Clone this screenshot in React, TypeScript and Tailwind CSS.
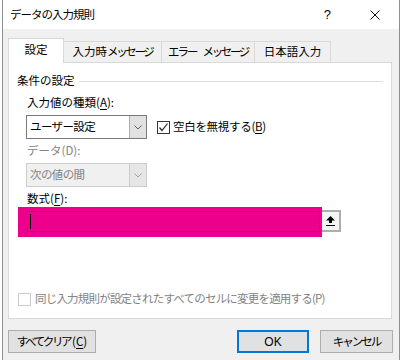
import React from 'react'

const FONT = "font-['Noto_Sans_CJK_JP','Noto_Sans',sans-serif]"

function Chevron({ color = '#606060' }: { color?: string }) {
  return (
    <svg width="8" height="5" viewBox="0 0 8 5">
      <polyline points="0.5,0.5 4,4 7.5,0.5" fill="none" stroke={color} strokeWidth="1" />
    </svg>
  )
}

function Select({ text, disabled = false }: { text: string; disabled?: boolean }) {
  return (
    <div
      className={`flex h-[24px] w-[121px] border ${
        disabled ? 'border-[#cccccc] bg-[#f0f0f0]' : 'border-[#7a7a7a] bg-white'
      }`}>
      <div
        className={`flex flex-1 items-center pl-[3px] tracking-[-0.6px] ${
          disabled ? 'text-[#838383]' : 'text-black'
        }`}>
        {text}
      </div>
      <div
        className={`flex w-[17px] items-center justify-center border-l ${
          disabled ? 'border-[#cccccc] bg-[#e6e6e6]' : 'border-[#adadad] bg-[#e1e1e1]'
        }`}>
        <Chevron color={disabled ? '#a0a0a0' : '#606060'} />
      </div>
    </div>
  )
}

function Button({ children, focused = false, w }: { children: React.ReactNode; focused?: boolean; w: string }) {
  return (
    <div
      className={`flex h-[23px] items-center justify-center bg-[#e1e1e1] ${w} ${
        focused ? 'border-2 border-[#0078d7]' : 'border border-[#adadad]'
      }`}>
      {children}
    </div>
  )
}

export default function App() {
  return (
    <div className={`flex h-[360px] w-[401px] bg-white text-[11.5px] leading-none text-black ${FONT}`}>
      <div className="ml-[2px] flex w-[398px] flex-col border-x border-[#8f8f8f]">
        {/* title bar */}
        <div className="flex h-[29px] shrink-0 items-center bg-white pl-[7px]">
          <span className="tracking-[-1px]">データの入力規則</span>
          <span className="ml-auto mr-[39px] font-['Liberation_Sans',sans-serif] text-[13px]">?</span>
          <svg width="10" height="10" viewBox="0 0 10 10" className="mr-[19px]">
            <path d="M0.5 0.5 L9.5 9.5 M9.5 0.5 L0.5 9.5" stroke="#111" strokeWidth="1" />
          </svg>
        </div>

        <div className="flex flex-1 flex-col bg-[#f0f0f0]">
          {/* tabs */}
          <div className="ml-[5px] mt-[9px] flex h-[24px] items-end">
            <div className="relative z-10 -mb-px flex h-[25px] w-[56px] items-center justify-center border-x border-t border-[#d9d9d9] bg-white pb-[2px]">
              設定
            </div>
            <div className="-ml-px flex h-[21px] w-[99px] items-center justify-center border border-b-0 border-[#d9d9d9]">
              入力時<span className="tracking-[-2.4px]">メッセージ</span>
            </div>
            <div className="-ml-px flex h-[21px] w-[94px] items-center justify-center border border-b-0 border-[#d9d9d9]">
              <span className="tracking-[-2px]">エラー</span>
              <span className="ml-[6px] tracking-[-2.4px]">メッセージ</span>
            </div>
            <div className="-ml-px flex h-[21px] w-[77px] items-center justify-center border border-b-0 border-[#d9d9d9]">
              日本語入力
            </div>
          </div>

          {/* panel */}
          <div className="ml-[5px] flex h-[257px] w-[384px] flex-col border border-[#d9d9d9] bg-white">
            <div className="mt-[8px] flex h-[20px] items-center pl-[8px]">
              <span>条件の設定</span>
              <div className="ml-[4px] mr-[8px] h-px flex-1 bg-[#dcdcdc]" />
            </div>

            <div className="ml-[18px] mt-[2px] flex h-[20px] items-center">
              入力値の種類(<span className="underline underline-offset-2">A</span>):
            </div>

            <div className="ml-[17px] mt-[2px] flex items-center">
              <Select text="ユーザー設定" />
              <div className="ml-[10px] flex items-center">
                <div className="flex h-[13px] w-[13px] items-center justify-center border border-[#333333] bg-white">
                  <svg width="11" height="11" viewBox="0 0 11 11">
                    <polyline points="1.5,5.5 4,8.5 9.5,1.5" fill="none" stroke="#222" strokeWidth="1.2" />
                  </svg>
                </div>
                <span className="ml-[3px] tracking-[-0.3px]">
                  空白を無視する(<span className="underline underline-offset-2">B</span>)
                </span>
              </div>
            </div>

            <div className="ml-[18px] mt-[2px] flex h-[20px] items-center text-[#838383]">データ(D):</div>

            <div className="ml-[17px] mt-[2px]">
              <Select text="次の値の間" disabled />
            </div>

            <div className="ml-[18px] mt-[4px] flex h-[16px] items-center">
              数式(<span className="underline underline-offset-2">F</span>):
            </div>

            <div className="ml-[9px] flex items-start">
              <div className="relative z-10 h-[30px] w-[304px] bg-[#ec008c] pl-[9px] pt-[4px]">
                <div className="flex h-[21px] w-[293px] items-center border border-[#a8147f] pl-[2px]">
                  <div className="h-[15px] w-px bg-black" />
                </div>
              </div>
              <div className="-ml-[3px] mt-[3px] flex h-[22px] w-[22px] items-center justify-center border-2 border-[#adadad] bg-[#f4f4f4]">
                <svg width="9" height="10" viewBox="0 0 9 10">
                  <path d="M4.5 0 L9 4.5 L6 4.5 L6 7 L3 7 L3 4.5 L0 4.5 Z" fill="#000" />
                  <rect x="0" y="9" width="9" height="1" fill="#000" />
                </svg>
              </div>
            </div>

            <div className="ml-[9px] mt-[54px] flex h-[16px] items-center text-[#838383]">
              <div className="h-[13px] w-[13px] border border-[#cccccc] bg-white" />
              <span className="ml-[4px] tracking-[-0.8px]">
                同じ入力規則が設定されたすべてのセルに変更を適用する(P)
              </span>
            </div>
          </div>

          {/* buttons */}
          <div className="ml-[5px] mr-[6px] mt-[11px] flex items-center">
            <Button w="w-[88px]">
              <span className="tracking-[-2.4px]">すべてクリア</span>
              <span className="ml-[2px]">
                (<span className="underline underline-offset-2">C</span>)
              </span>
            </Button>
            <div className="ml-auto">
              <Button w="w-[72px]" focused>
                <span className="font-['Liberation_Sans',sans-serif] text-[12px]">OK</span>
              </Button>
            </div>
            <div className="ml-[11px]">
              <Button w="w-[73px]">
                <span className="tracking-[-2px]">キャンセル</span>
              </Button>
            </div>
          </div>
        </div>
      </div>
    </div>
  )
}
